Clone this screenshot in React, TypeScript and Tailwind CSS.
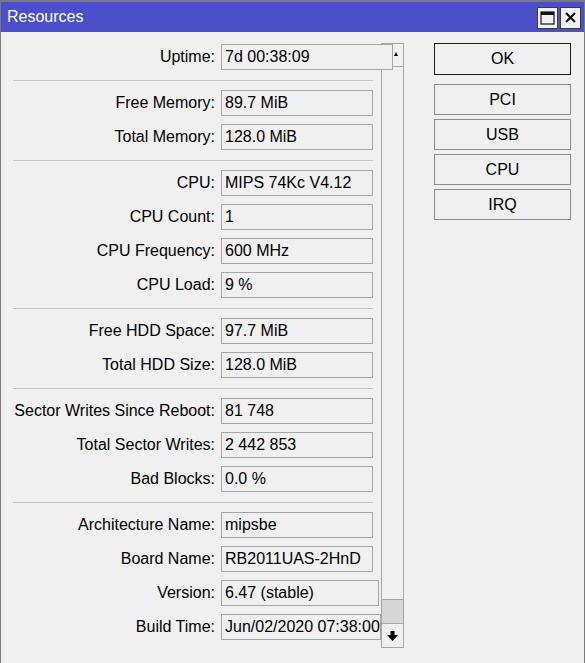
type Row = { label: string; value: string; w?: string };

const GROUPS: Row[][] = [
  [
    { label: "Free Memory", value: "89.7 MiB" },
    { label: "Total Memory", value: "128.0 MiB" },
  ],
  [
    { label: "CPU", value: "MIPS 74Kc V4.12" },
    { label: "CPU Count", value: "1" },
    { label: "CPU Frequency", value: "600 MHz" },
    { label: "CPU Load", value: "9 %" },
  ],
  [
    { label: "Free HDD Space", value: "97.7 MiB" },
    { label: "Total HDD Size", value: "128.0 MiB" },
  ],
  [
    { label: "Sector Writes Since Reboot", value: "81 748" },
    { label: "Total Sector Writes", value: "2 442 853" },
    { label: "Bad Blocks", value: "0.0 %" },
  ],
  [
    { label: "Architecture Name", value: "mipsbe" },
    { label: "Board Name", value: "RB2011UAS-2HnD" },
    { label: "Version", value: "6.47 (stable)", w: "w-[158px]" },
    { label: "Build Time", value: "Jun/02/2020 07:38:00", w: "w-[160px]" },
  ],
];

const BUTTONS = ["PCI", "USB", "CPU", "IRQ"];

function Field({ label, value, w }: Row) {
  return (
    <div className="flex items-center h-[26px]">
      <div className="w-[214px] text-right whitespace-nowrap">{label}:</div>
      <div
        className={`ml-[6px] h-[26px] ${w ?? "w-[152px]"} border border-[#a6a6a6] bg-[#f0f0f0] pl-[3px] flex items-center whitespace-nowrap overflow-hidden`}
      >
        {value}
      </div>
    </div>
  );
}

function Separator() {
  return <div className="ml-[12px] mt-[10px] mb-[9px] w-[360px] h-px bg-[#c4c4c4]" />;
}

export default function App() {
  return (
    <div
      className="w-[585px] h-[663px] bg-[#f0f0f0] border-l border-r border-t-2 border-[#7a7a7a] flex flex-col overflow-hidden text-[16px] text-black"
      style={{ fontFamily: '"Liberation Sans", Arial, sans-serif' }}
    >
      {/* title bar */}
      <div className="h-[30px] bg-[#4b4fc9] flex items-center pl-[6px] pr-[3px]">
        <span className="text-white text-[16px] leading-none">Resources</span>
        <div className="ml-auto flex gap-[2px] pt-px">
          <div className="w-[21px] h-[22px] bg-[#f0f0f0] border border-[#3c3c3c] grid place-items-center">
            <svg width="15" height="14" viewBox="0 0 15 14">
              <rect x="1" y="1" width="13" height="12" fill="none" stroke="#111" strokeWidth="1.2" />
              <rect x="1" y="1" width="13" height="3" fill="#111" />
            </svg>
          </div>
          <div className="w-[21px] h-[22px] bg-[#f0f0f0] border border-[#3c3c3c] grid place-items-center">
            <svg width="13" height="13" viewBox="0 0 13 13">
              <path d="M2 2 L11 11 M11 2 L2 11" stroke="#111" strokeWidth="2.2" />
            </svg>
          </div>
        </div>
      </div>

      {/* body */}
      <div className="flex flex-1">
        <div className="flex">
          {/* form */}
          <div className="w-[380px] pt-[12px]">
            <div className="flex items-center h-[26px]">
              <div className="w-[214px] text-right">Uptime:</div>
              <div className="relative z-10 ml-[6px] -mr-[12px] h-[26px] w-[172px] border border-[#a6a6a6] bg-[#f0f0f0] pl-[3px] flex items-center">
                7d 00:38:09
              </div>
            </div>
            {GROUPS.map((g, i) => (
              <div key={i}>
                <Separator />
                <div className="flex flex-col gap-[8px]">
                  {g.map((r) => (
                    <Field key={r.label} {...r} />
                  ))}
                </div>
              </div>
            ))}
          </div>

          {/* scrollbar */}
          <div className="mt-[11px] w-[23px] h-[605px] border border-[#a6a6a6] flex flex-col">
            <div className="h-[23px] border-b border-[#a6a6a6] relative">
              <svg className="absolute left-[12px] top-[8px]" width="4" height="4" viewBox="0 0 4 4">
                <path d="M0 4 L2 0 L4 4 Z" fill="#000" />
              </svg>
            </div>
            <div className="flex-1" />
            <div className="h-[25px] bg-[#d6d6d6] border-t border-b border-[#a6a6a6]" />
            <div className="h-[23px] grid place-items-center">
              <svg width="11" height="10" viewBox="0 0 11 10">
                <path d="M3.5 0 H7.5 V4 H11 L5.5 10 L0 4 H3.5 Z" fill="#000" />
              </svg>
            </div>
          </div>
        </div>

        {/* buttons */}
        <div className="ml-[30px] pt-[11px] flex flex-col gap-[4px]">
          <button className="w-[137px] h-[32px] border border-[#1e1e1e] bg-[#f0f0f0] mb-[5px]">OK</button>
          {BUTTONS.map((b) => (
            <button key={b} className="w-[137px] h-[31px] border border-[#8c8c8c] bg-[#f0f0f0]">
              {b}
            </button>
          ))}
        </div>
      </div>
    </div>
  );
}
